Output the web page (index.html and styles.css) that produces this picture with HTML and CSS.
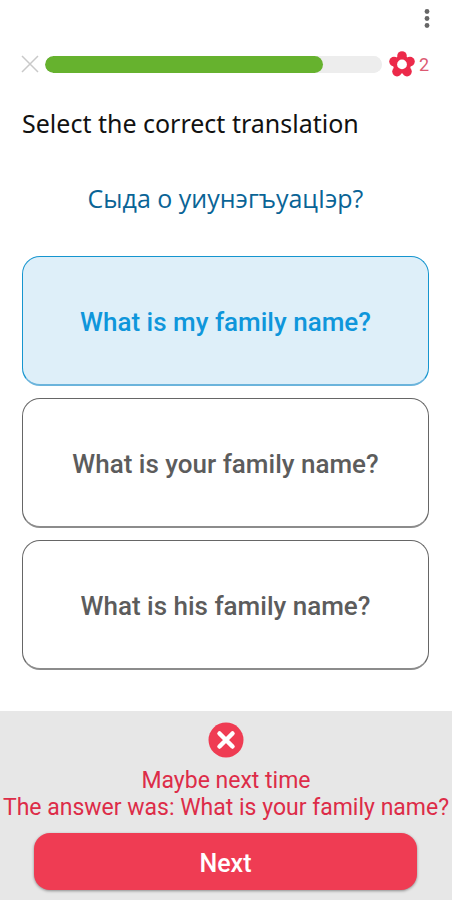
FILE: index.html
```
<!DOCTYPE html>
<html lang="en">
  <head>
    <meta charset="UTF-8" />
    <meta name="viewport" content="width=device-width, initial-scale=1.0" />
    <title>Select the correct translation</title>
    <link rel="stylesheet" href="styles.css">
  </head>
  <body>
    <div class="screen">
      <header class="toolbar">
        <button type="button" class="icon-button" aria-label="More options">
          <svg width="6" height="20" viewBox="0 0 6 20">
            <g fill="#666">
              <circle cx="3" cy="3.5" r="2.4" />
              <circle cx="3" cy="10.5" r="2.4" />
              <circle cx="3" cy="17.5" r="2.4" />
            </g>
          </svg>
        </button>
      </header>
      <div class="status">
        <button type="button" class="icon-button" aria-label="Close">
          <svg width="18" height="18" viewBox="0 0 18 18">
            <path d="M1 1L17 17M17 1L1 17" stroke="#c9c9c9" stroke-width="1.5" fill="none" />
          </svg>
        </button>
        <progress class="progress" max="1000" value="825" aria-label="Lesson progress"></progress>
        <div class="lives">
          <svg width="27" height="26" viewBox="0 0 27 26">
            <g fill="#ec2a4a">
              <circle cx="14" cy="5" r="4.8" />
              <circle cx="22" cy="10.6" r="4.8" />
              <circle cx="19" cy="20.6" r="4.8" />
              <circle cx="9" cy="20.6" r="4.8" />
              <circle cx="6" cy="10.6" r="4.8" />
              <circle cx="14" cy="13.4" r="9" />
            </g>
            <circle cx="14" cy="13.4" r="4.9" fill="#fff" />
          </svg>
          <span>2</span>
        </div>
      </div>
      <main class="question">
        <h1 class="title">Select the correct translation</h1>
        <p class="phrase" lang="ady">Сыда о уиунэгъуацӀэр?</p>
        <div class="answers">
          <button type="button" class="answer selected" aria-pressed="true">What is my family name?</button>
          <button type="button" class="answer" aria-pressed="false">What is your family name?</button>
          <button type="button" class="answer" aria-pressed="false">What is his family name?</button>
        </div>
      </main>
      <footer class="result">
        <svg width="36" height="36" viewBox="0 0 36 36">
          <circle cx="18" cy="18" r="17.5" fill="#ef3c53" />
          <path d="M11.5 11.5L24.5 24.5M24.5 11.5L11.5 24.5" stroke="#fff" stroke-width="4.5" stroke-linecap="round" />
        </svg>
        <p class="message">Maybe next time<br />The answer was: What is your family name?</p>
        <button type="button" class="next">Next</button>
      </footer>
    </div>
  </body>
</html>
```
FILE: styles.css
```
* {
  padding: 0;
  margin: 0;
  box-sizing: border-box;
}
body {
  background: #fff;
  font-family: Roboto, "Liberation Sans", sans-serif;
}
button {
  border: 0;
  background: none;
  font-family: inherit;
  cursor: pointer;
}
svg {
  display: block;
}
.screen {
  display: flex;
  flex-direction: column;
  min-height: 100vh;
  padding-right: 2px;
}
.toolbar {
  display: flex;
  justify-content: flex-end;
  padding: 8px 22px 0;
}
.status {
  display: flex;
  align-items: center;
  gap: 6px;
  padding: 23px 23px 0 21px;
}
.progress {
  flex: 1;
  min-width: 0;
  height: 17px;
  border: 0;
  border-radius: 9px;
  background: #ededed;
  overflow: hidden;
  appearance: none;
}
.progress::-webkit-progress-bar {
  border-radius: 9px;
  background: #ededed;
}
.progress::-webkit-progress-value {
  border-radius: 9px;
  background: #66b22e;
}
.lives {
  display: flex;
  align-items: center;
  gap: 4px;
  color: #dc5a72;
  font-size: 18px;
}
.question {
  padding: 29px 23px 40px 22px;
}
.title {
  color: #111;
  font-family: "Noto Sans", sans-serif;
  font-size: 25px;
  font-weight: 400;
  line-height: 34px;
}
.phrase {
  margin: 41px 0;
  color: #0a6496;
  font-family: "Open Sans", "Noto Sans", sans-serif;
  font-size: 25px;
  font-weight: 500;
  line-height: 34px;
  text-align: center;
}
.answers {
  display: flex;
  flex-direction: column;
  gap: 12px;
}
.answer {
  min-height: 130px;
  padding: 18px 16px 16px;
  border: 1px solid #666;
  border-bottom-width: 2px;
  border-bottom-color: #8c8c8c;
  border-radius: 18px;
  background: #fff;
  color: #5c5c5c;
  font-size: 26px;
  font-weight: 500;
}
.selected {
  border-color: #1595cf;
  border-bottom-color: #6bb4dc;
  background: #deeff9;
  color: #0f96db;
}
.result {
  display: flex;
  flex-direction: column;
  align-items: center;
  margin-top: auto;
  padding: 11px 0 10px;
  background: #e7e7e7;
}
.message {
  margin: 9px 0 12px;
  color: #dd2c48;
  font-size: 23px;
  line-height: 27px;
  text-align: center;
}
.next {
  align-self: stretch;
  min-height: 57px;
  margin: 0 35px 0 34px;
  padding-top: 3px;
  border-radius: 16px;
  background: #ef3c53;
  box-shadow: 0 1px 3px rgba(0, 0, 0, 0.4);
  color: #fff;
  font-size: 25px;
  font-weight: 500;
}
```
